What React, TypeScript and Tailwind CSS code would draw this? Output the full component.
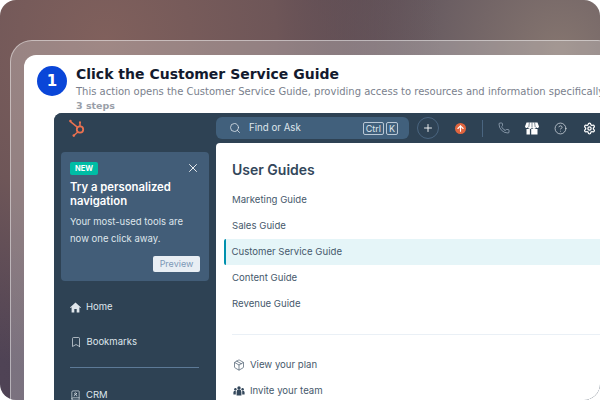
import { ArrowUp, Bookmark, BookUser, CircleHelp, Package, Phone, Plus, Search, Settings, X } from "lucide-react";

const guides = ["Marketing Guide", "Sales Guide", "Customer Service Guide", "Content Guide", "Revenue Guide"];

function Sprocket() {
    return (
        <svg width="20" height="20" viewBox="0 0 20 20" fill="none" stroke="#ea7150" strokeWidth="1.5" strokeLinecap="round">
            <circle cx="12" cy="11.5" r="3.2" strokeWidth="1.8" />
            <path d="M12 8V5M9.6 9.4 2.8 3.8M9.8 14 6.4 17" />
            <circle cx="2.4" cy="3" r="1.3" fill="#ea7150" stroke="none" />
            <circle cx="12" cy="4.4" r="1.1" fill="#ea7150" stroke="none" />
            <circle cx="5.8" cy="17.6" r="1.3" fill="#ea7150" stroke="none" />
        </svg>
    );
}

function ShopIcon() {
    return (
        <svg width="14" height="13" viewBox="0 0 14 13" className="ml-[15px] shrink-0" fill="#ffffff">
            <path d="M1.5 0.5h11L14 4.5a1.6 1.6 0 0 1-3 .6 1.9 1.9 0 0 1-4 0 1.9 1.9 0 0 1-4 0 1.6 1.6 0 0 1-3-.6z" />
            <path d="M4.4.5 3.8 5M7 .5V5M9.6.5 10.2 5" stroke="#2e4254" strokeWidth="0.6" />
            <path d="M1.5 7h3.4v5.5H1.5zM6.2 7h6.3v5.5H6.2z" />
        </svg>
    );
}

function HomeIcon() {
    return (
        <svg width="11" height="11" viewBox="0 0 11 11" className="shrink-0" fill="#dfe6ec">
            <path d="M5.5.6 11 5.4l-.6.7-1-.8V10.400H6.700V7H4.300v3.400H1.600V5.300l-1 .8L0 5.400z" />
        </svg>
    );
}

function TeamIcon() {
    return (
        <svg width="12" height="10" viewBox="0 0 12 10" className="shrink-0" fill="#33475b">
            <circle cx="6" cy="2" r="1.7" />
            <circle cx="2.400" cy="3.200" r="1.200" />
            <circle cx="9.600" cy="3.200" r="1.200" />
            <path d="M3.600 9.500V6a2.400 2.400 0 0 1 4.800 0v3.500zM.4 8.500V6.400c0-1 .8-1.700 2-1.700l.4.100v3.700zM11.600 8.500V6.400c0-1-.8-1.700-2-1.700l-.4.100v3.700z" />
        </svg>
    );
}

function TopBar() {
    return (
        <div className="flex h-[30px] shrink-0 items-center bg-[#2e4254] text-[#dfe6ec]">
            <div className="ml-[14px] w-[148px] shrink-0">
                <Sprocket />
            </div>
            <div className="flex h-[22px] w-[193px] shrink-0 items-center rounded-[6px] bg-[#41607c] pl-[13px] pr-[11px]">
                <Search size={12} strokeWidth={1.6} />
                <span className="ml-[8px] pt-[1px] text-[9.7px]">Find or Ask</span>
                <span className="ml-auto rounded-[2px] border border-[#b9c8d6] px-[2px] text-[9px] leading-[11px]">Ctrl</span>
                <span className="ml-[2px] rounded-[2px] border border-[#b9c8d6] px-[2px] text-[9px] leading-[11px]">K</span>
            </div>
            <div className="ml-[8px] flex size-[22px] shrink-0 items-center justify-center rounded-full border border-[#4a6580] text-white">
                <Plus size={12} strokeWidth={1.8} />
            </div>
            <div className="ml-[16px] flex size-[11px] shrink-0 items-center justify-center rounded-full bg-[#e0653f] text-white">
                <ArrowUp size={9} strokeWidth={3} />
            </div>
            <div className="ml-[16px] h-[17px] w-px shrink-0 bg-[#4a6580]" />
            <Phone size={12} strokeWidth={1.2} className="ml-[15px] shrink-0 text-[#b9c8d6]" />
            <ShopIcon />
            <CircleHelp size={13} strokeWidth={1.3} className="ml-[15px] shrink-0" />
            <Settings size={13} strokeWidth={2.4} className="ml-[16px] shrink-0 text-white" />
        </div>
    );
}

function Sidebar() {
    return (
        <div className="flex w-[162px] shrink-0 flex-col px-[7px] pt-[9px] text-[#dfe6ec]">
            <div className="flex h-[130px] flex-col rounded-[4px] bg-[#425d78] px-[9px] pt-[9px]">
                <div className="flex items-center justify-between">
                    <span className="rounded-[2px] bg-[#00bda5] px-[5px] text-[7.5px] font-bold leading-[13px] text-white">NEW</span>
                    <X size={14} strokeWidth={1.5} className="text-white" />
                </div>
                <p className="mt-[5px] text-[11.3px] font-semibold leading-[14px] text-white">Try a personalized navigation</p>
                <p className="mt-[5px] text-[9.5px] leading-[17px]">Your most-used tools are now one click away.</p>
                <div className="mt-auto mb-[9px] ml-auto flex h-[16px] w-[47px] items-center justify-center rounded-[2px] bg-[#e8eef4] text-[9px] text-[#7c98b6]">Preview</div>
            </div>
            <div className="ml-[9px] mt-[19px] flex h-[16px] items-center gap-[5px] text-[9.5px]">
                <HomeIcon />
                <span>Home</span>
            </div>
            <div className="ml-[9px] mt-[19px] flex h-[16px] items-center gap-[5px] text-[9.5px]">
                <Bookmark size={12} strokeWidth={1.4} className="-ml-[0.5px]" />
                <span>Bookmarks</span>
            </div>
            <div className="ml-[9px] mr-[10px] mt-[17px] h-px bg-[#5d7a97]" />
            <div className="ml-[9px] mt-[19px] flex h-[16px] items-center gap-[5px] text-[9.5px]">
                <BookUser size={11} strokeWidth={1.5} />
                <span>CRM</span>
            </div>
        </div>
    );
}

function GuidePanel() {
    return (
        <div className="min-w-0 flex-1 rounded-tl-[4px] bg-white pt-[18px] text-[#33475b]">
            <h2 className="ml-[16px] text-[14px] font-semibold leading-[18px]">User Guides</h2>
            <div className="ml-[8px] mt-[8px] flex flex-col">
                {guides.map((guide) => (
                    <div
                        key={guide}
                        className={`flex h-[26px] items-center pl-[8px] pt-[1px] text-[9.6px] text-[#46596c] ${guide === "Customer Service Guide" ? "rounded-l-[2px] border-l-[2.5px] border-[#0091ae] bg-[#e5f5f8] !pl-[5.5px]" : ""}`}
                    >
                        {guide}
                    </div>
                ))}
            </div>
            <div className="ml-[16px] mt-[17px] h-px bg-[#eaf0f6]" />
            <div className="ml-[17px] mt-[17px] flex h-[26px] items-center gap-[5px] text-[9.6px] text-[#46596c]">
                <Package size={12} strokeWidth={1.4} />
                <span>View your plan</span>
            </div>
            <div className="ml-[17px] flex h-[26px] items-center gap-[5px] text-[9.6px] text-[#46596c]">
                <TeamIcon />
                <span>Invite your team</span>
            </div>
        </div>
    );
}

export default function App() {
    return (
        <div className="h-[400px] w-[600px] overflow-hidden bg-white">
            <div className="h-[400px] overflow-hidden rounded-[16px] bg-[radial-gradient(circle_at_105px_40px,#80605c_0%,#6e5658_28%,transparent_55%),radial-gradient(circle_at_560px_50px,#85756f_0%,#6c5f63_18%,transparent_42%),linear-gradient(90deg,#4f4355_0%,#463c4b_60%,#4d4350_100%)] pl-[10px] pt-[40px] font-['DejaVu_Sans',sans-serif]">
                <div className="h-[370px] w-[600px] rounded-tl-[22px] rounded-tr-[12px] border border-white/45 bg-white/25 pl-[13px] pt-[14px]">
                    <div className="h-[360px] w-[600px] overflow-hidden rounded-tl-[12px] bg-white pl-[13px] pt-[11px]">
                        <div className="flex gap-[9px]">
                            <div className="flex size-[30px] shrink-0 items-center justify-center rounded-full bg-[#0a46d8] text-[15px] font-bold text-white">1</div>
                            <div className="min-w-0">
                                <h1 className="whitespace-nowrap text-[14px] font-bold leading-[17px] text-[#131a2e]">Click the Customer Service Guide</h1>
                                <p className="mt-[2px] whitespace-nowrap text-[10px] leading-[14px] text-[#7a7f8d]">This action opens the Customer Service Guide, providing access to resources and information specifically</p>
                                <p className="mt-[1px] text-[9.5px] font-semibold leading-[12px] text-[#9a9fa9]">3 steps</p>
                            </div>
                        </div>
                        <div className="ml-[17px] mt-[1px] flex h-[290px] w-[600px] flex-col overflow-hidden rounded-tl-[8px] bg-[#2e4254] font-['Inter',sans-serif]">
                            <TopBar />
                            <div className="flex min-h-0 flex-1">
                                <Sidebar />
                                <GuidePanel />
                            </div>
                        </div>
                    </div>
                </div>
            </div>
        </div>
    );
}
